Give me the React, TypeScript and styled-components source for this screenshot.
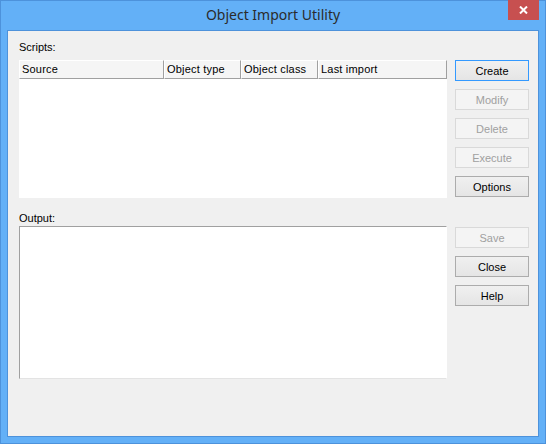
import * as React from 'react';
import styled, { createGlobalStyle } from 'styled-components';

const GlobalStyle = createGlobalStyle`
  html, body {
    margin: 0;
    padding: 0;
    background: #ffffff;
  }
  * {
    box-sizing: border-box;
  }
`;

const Window = styled.div`
  width: 546px;
  height: 444px;
  border: 1px solid #4d92db;
  background: #63b0f7;
  display: flex;
  flex-direction: column;
  font-family: 'Liberation Sans', Arial, sans-serif;
`;

const TitleBar = styled.div`
  height: 29px;
  display: grid;
  grid-template-columns: 1fr auto 1fr;
  align-items: start;
`;

const Title = styled.div`
  grid-column: 2;
  padding-top: 5px;
  font-family: 'Noto Sans', 'Open Sans', sans-serif;
  font-size: 14px;
  line-height: 18px;
  color: #2b2b2b;
`;

const CloseBtn = styled.div`
  grid-column: 3;
  justify-self: end;
  margin-top: -1px;
  margin-right: 6px;
  width: 31px;
  height: 20px;
  background: #c75050;
  display: flex;
  align-items: center;
  justify-content: center;
`;

const Client = styled.div`
  flex: 1;
  margin: 0 6px 6px;
  border: 1px solid #4d92db;
  background: #f0f0f0;
  padding: 10px 0 0 11px;
  display: flex;
  gap: 8px;
  font-size: 11px;
`;

const LeftCol = styled.div`
  width: 428px;
  display: flex;
  flex-direction: column;
`;

const Label = styled.div<{ top?: number; bottom?: number }>`
  height: 13px;
  line-height: 13px;
  color: #000;
  margin-top: ${(p) => p.top ?? 0}px;
  margin-bottom: ${(p) => p.bottom ?? 6}px;
`;

const List = styled.div`
  height: 138px;
  background: #fff;
  display: flex;
  flex-direction: column;
`;

const Header = styled.div`
  display: flex;
  height: 19px;
`;

const HeadCell = styled.div<{ w: number }>`
  width: ${(p) => p.w}px;
  height: 19px;
  padding-left: 2px;
  line-height: 17px;
  background: #f5f5f5;
  border-top: 1px solid #fff;
  border-left: 1px solid #fff;
  border-right: 1px solid #a0a0a0;
  border-bottom: 1px solid #a0a0a0;
  color: #000;
  letter-spacing: 0.2px;
  white-space: nowrap;
  overflow: hidden;
`;

const Output = styled.div`
  height: 153px;
  background: #fff;
  border-top: 1px solid #a0a0a0;
  border-left: 1px solid #a0a0a0;
  border-right: 1px solid #fff;
  border-bottom: 1px solid #e3e3e3;
`;

const RightCol = styled.div`
  width: 74px;
  padding-top: 19px;
  display: flex;
  flex-direction: column;
`;

const Group = styled.div<{ top?: number }>`
  display: flex;
  flex-direction: column;
  gap: 8px;
  margin-top: ${(p) => p.top ?? 0}px;
`;

const Button = styled.button<{ $default?: boolean }>`
  width: 74px;
  height: 21px;
  padding: 0;
  font-family: 'Liberation Sans', Arial, sans-serif;
  font-size: 11px;
  color: #000;
  border: 1px solid ${(p) => (p.$default ? '#3399ff' : '#acacac')};
  background: linear-gradient(#f0f0f0, #e5e5e5);
  border-radius: 0;

  &:disabled {
    color: #a0a0a0;
    border-color: #d9d9d9;
    background: #f4f4f4;
  }
`;

const columns = [
  { name: 'Source', w: 145 },
  { name: 'Object type', w: 77 },
  { name: 'Object class', w: 77 },
  { name: 'Last import', w: 129 },
];

const App = () => {
  return (
    <>
      <GlobalStyle />
      <Window>
        <TitleBar>
          <Title>Object Import Utility</Title>
          <CloseBtn>
            <svg width='9' height='8' viewBox='0 0 9 8'>
              <path d='M1 0.5 L8 7.5 M8 0.5 L1 7.5' stroke='#fff' strokeWidth='2' />
            </svg>
          </CloseBtn>
        </TitleBar>
        <Client>
          <LeftCol>
            <Label>Scripts:</Label>
            <List>
              <Header>
                {columns.map((c) => (
                  <HeadCell key={c.name} w={c.w}>
                    {c.name}
                  </HeadCell>
                ))}
              </Header>
            </List>
            <Label top={14} bottom={1}>
              Output:
            </Label>
            <Output />
          </LeftCol>
          <RightCol>
            <Group>
              <Button $default>Create</Button>
              <Button disabled>Modify</Button>
              <Button disabled>Delete</Button>
              <Button disabled>Execute</Button>
              <Button>Options</Button>
            </Group>
            <Group top={30}>
              <Button disabled>Save</Button>
              <Button>Close</Button>
              <Button>Help</Button>
            </Group>
          </RightCol>
        </Client>
      </Window>
    </>
  );
};

export default App;
